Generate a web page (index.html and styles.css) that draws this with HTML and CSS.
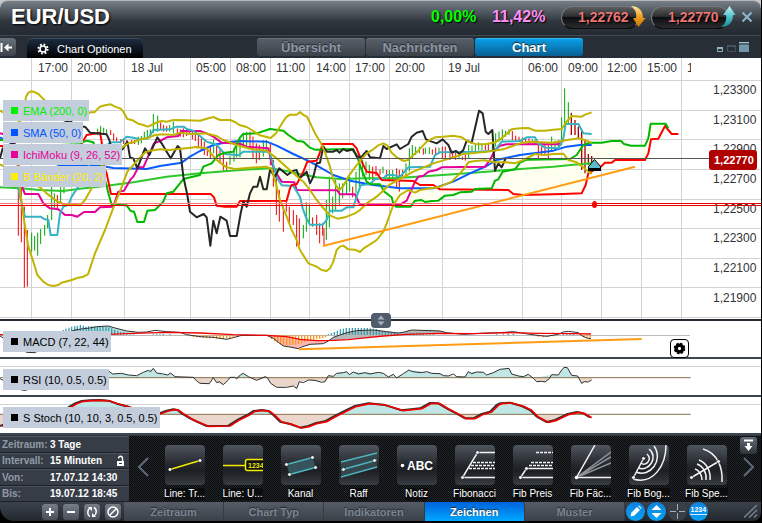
FILE: index.html
```
<!DOCTYPE html>
<html lang="de">
<head>
<meta charset="utf-8">
<title>EUR/USD</title>
<link rel="stylesheet" href="styles.css">
</head>
<body>
<main class="window">
  <header class="title-bar">
    <h1>EUR/USD</h1>
    <div class="quotes">
      <span class="change up">0,00%</span>
      <span class="change spread">11,42%</span>
      <button class="price">1,22762
        <svg class="arrow" width="16" height="24" viewBox="0 0 16 24"><defs><linearGradient id="gold" x1="0" y1="0" x2="0" y2="1"><stop offset="0" stop-color="#ffe9a0"/><stop offset=".5" stop-color="#f0a020"/><stop offset="1" stop-color="#c87000"/></linearGradient></defs><path d="M1 1C8 1 13 5 13 13H15.500L8.500 22L3 13H6C7 8 5 4 1 1Z" fill="url(#gold)"/></svg>
      </button>
      <button class="price">1,22770
        <svg class="arrow" width="16" height="24" viewBox="0 0 16 24"><defs><linearGradient id="aqua" x1="0" y1="0" x2="0" y2="1"><stop offset="0" stop-color="#c5f4f5"/><stop offset=".5" stop-color="#4fc4cc"/><stop offset="1" stop-color="#1d8790"/></linearGradient></defs><path d="M1 22C8 22 13 18 13 10H15.500L9.500 1L3 10H6C7 15 5 19 1 22Z" fill="url(#aqua)"/></svg>
      </button>
      <button class="plain" aria-label="Schließen"><svg width="12" height="12" viewBox="0 0 12 12"><path d="M1.500 1.500L10.500 10.500M10.500 1.500L1.500 10.500" stroke="#8cb6cf" stroke-width="2"/></svg></button>
    </div>
  </header>

  <nav class="view-bar">
    <button class="collapse" aria-label="Einklappen"><svg width="16" height="18" viewBox="0 0 16 18"><path d="M1.500 5V14M12 9.500H6" stroke="#fff" stroke-width="2" fill="none"/><path d="M4 9.500L8.500 5.500V13.500Z" fill="#fff"/></svg></button>
    <button class="options"><svg width="12" height="12" viewBox="-6 -6 12 12"><circle r="3" fill="none" stroke="#fff" stroke-width="1.600"/><circle r="4.600" fill="none" stroke="#fff" stroke-width="2" stroke-dasharray="1.800 1.813"/></svg>Chart Optionen</button>
    <div class="views">
      <button class="view">Übersicht</button>
      <button class="view">Nachrichten</button>
      <button class="view active">Chart</button>
    </div>
    <svg class="win-icons" width="34" height="12" viewBox="0 0 34 12"><path d="M1.500 6.500H6.500V10.500H1.500Z" fill="none" stroke="#8fb2c4"/><path d="M1 6H7V8H1Z" fill="#8fb2c4"/><path d="M11.500 4.500H19.500V10.500H11.500Z" fill="none" stroke="#44505c"/><path d="M11 4H20V6H11Z" fill="#44505c"/><path d="M23 1H33V11H23Z" fill="#7195a9"/><path d="M23 3H33" stroke="#26303a"/><path d="M23 1.500H33" stroke="#9fc3d6"/></svg>
  </nav>

  <section class="price-chart">
    <svg class="plot" viewBox="0 58 761 261">
      <path class="grid" d="M31.500 58V319M71.500 58V319M124.500 58V319M190.500 58V319M230.500 58V319M270.500 58V319M309.500 58V319M349.500 58V319M389.500 58V319M442.500 58V319M522.500 58V319M561.500 58V319M601.500 58V319M641.500 58V319M681.500 58V319M0 80.500H761M0 110.500H761M0 139.500H761M0 169.500H761M0 199.500H761M0 228.500H761M0 258.500H761M0 287.500H761M0 317.500H761"/>
      <g class="axis">
        <text x="38" y="72">17:00</text><text x="77" y="72">20:00</text><text x="131" y="72">18 Jul</text><text x="196" y="72">05:00</text><text x="236" y="72">08:00</text><text x="276" y="72">11:00</text><text x="316" y="72">14:00</text><text x="355" y="72">17:00</text><text x="395" y="72">20:00</text><text x="448" y="72">19 Jul</text><text x="528" y="72">06:00</text><text x="568" y="72">09:00</text><text x="607" y="72">12:00</text><text x="647" y="72">15:00</text><text x="687" y="72" clip-path="url(#time-end)">1</text>
        <text x="713" y="94">1,23300</text><text x="713" y="124">1,23100</text><text x="713" y="153">1,22900</text><text x="713" y="183">1,22700</text><text x="713" y="213">1,22500</text><text x="713" y="242">1,22300</text><text x="713" y="272">1,22100</text><text x="713" y="302">1,21900</text>
      </g>
      <clipPath id="time-end"><rect x="684" y="58" width="7" height="20"/></clipPath>
      <g class="series" transform="translate(0 80) scale(.333333)">
        <g class="cloud">
          <path d="M333 345L632 342 650 377 710 380 720 363 860 362 875 315 910 275 922 245 950 242 968 200 945 209 910 185 850 152 810 147 730 162 700 215 655 225 610 260 600 285 550 297 500 340 465 390 442 392 432 426 412 426 402 395 380 376 335 374Z"/>
          <path d="M968 192H1058L1085 245 1100 275 1130 279 1145 300 1240 303 1300 315 1320 328 1525 330 1540 342 1745 340 1757 315 1765 280 1805 258 1845 240 1935 240 1953 178 1975 176 1997 131 1952 131 1935 197 1893 197 1863 183 1770 188 1750 195 1710 237 1580 239 1545 268 1508 275 1475 325 1380 337 1335 347 1315 362 1188 380 1153 335 1140 313 1100 305 1070 225 1055 207 968 209Z"/>
        </g>
        <path class="candle red" d="M55 290V467M64 310V487M73 380V623M82 450V620M172 345V385M332 150V165M341 160V182M350 172V185M362 178V190M371 180V192M380 180V192M395 180V192M404 180V192M482 127V150M491 135V155M500 138V155M532 145V165M541 148V170M550 145V172M560 150V168M568 152V165M577 155V178M586 155V183M595 165V205M604 175V210M613 185V225M622 200V228M631 200V235M650 190V238M660 205V250M670 222V272M680 245V273M750 155V205M759 170V235M769 190V250M778 195V240M811 190V256M820 240V320M829 280V405M838 330V425M850 380V455M859 360V395M868 380V430M880 390V435M890 405V500M898 415V495M938 412V440M950 405V465M959 430V490M968 430V467M972 445V495M1058 320V352M1118 260V300M1128 258V288M1140 268V285M1160 270V290M1190 265V325M1198 270V335M1208 270V290M1270 205V224M1297 208V224M1307 203V223M1327 200V237M1336 200V237M1350 205V240M1358 212V235M1367 215V240M1387 230V240M1396 225V242M1456 190V210M1465 192V213M1537 153V180M1547 167V182M1557 170V185M1567 173V188M1577 175V190M1587 175V192M1605 180V194M1615 185V235M1625 190V228M1635 195V228M1645 190V237"/>
        <path class="candle green" d="M95 458V515M104 468V512M113 458V527M122 447V492M134 435V467M143 405V445M155 320V420M163 340V383M182 318V370M192 318V340M293 146V165M302 138V160M311 143V160M320 148V160M415 170V195M424 168V190M433 155V180M442 150V178M451 148V172M460 102V160M473 107V155M509 135V155M520 125V160M641 178V220M690 228V255M702 205V245M710 190V232M720 175V232M730 158V200M740 155V200M790 180V230M799 180V215M910 435V475M919 367V455M928 373V430M979 360V480M988 290V442M998 350V400M1007 300V390M1018 310V375M1028 310V355M1040 300V345M1049 290V335M1068 275V340M1078 240V320M1088 240V290M1098 245V285M1108 255V300M1149 260V280M1168 270V305M1178 270V300M1218 250V290M1228 205V275M1237 195V235M1247 200V225M1258 200V220M1276 203V222M1288 202V222M1317 203V220M1377 225V238M1406 195V235M1416 197V220M1426 192V218M1436 187V210M1446 190V210M1477 187V211M1487 160V200M1497 155V185M1507 148V185M1517 152V170M1527 148V165M1597 178V193M1655 170V215M1665 182V210M1675 180V208M1685 112V195M1694 25V150M1705 67V130"/>
        <path class="candle dark" d="M1714 98V165M1725 120V165M1735 140V175M1745 150V270M1755 178V280M1765 222V255M1775 228V250"/>
        <polyline class="ema" points="0,322 60,325 120,330 190,333 240,326 315,318 400,307 500,290 600,280 720,270 810,265 860,273 900,282 950,292 1020,297 1100,295 1180,295 1250,290 1360,283 1460,275 1560,267 1660,260 1720,254 1775,250"/>
        <polyline class="sma" points="0,172 90,220 180,257 300,257 340,264 440,267 480,258 545,248 570,230 600,213 640,195 680,187 720,183 800,185 830,197 880,222 930,245 960,262 1000,285 1050,302 1120,315 1200,325 1300,325 1360,305 1410,280 1460,258 1490,240 1560,225 1660,212 1700,200 1740,195 1775,195"/>
        <polyline class="ichi" points="0,160 40,170 68,325 75,342 115,342 130,370 150,385 175,388 195,405 215,405 232,410 252,396 285,396 300,382 340,380 355,335 372,332 392,298 400,290 415,262 430,262 445,228 462,190 480,183 500,172 535,168 545,153 600,153 620,160 640,170 665,188 700,190 725,193 740,200 805,205 815,250 835,290 845,305 883,307 890,330 1012,331 1020,343 1065,343 1080,375 1200,374 1220,362 1232,335 1245,305 1255,290 1270,287 1285,275 1310,270 1325,262 1455,260 1470,240 1485,210 1500,197 1520,193 1675,193 1690,182"/>
        <polyline class="tenkan" points="50,300 60,350 75,410 122,410 132,417 145,420 152,465 172,465 180,400 190,380 205,375 215,350 235,320 290,210 335,187 360,187 380,170 400,173 420,178 445,175 460,150 510,148 530,140 552,140 560,147 580,152 600,168 620,185 650,195 675,222 715,226 730,215 800,215 810,220 820,255 830,292 845,316 880,318 900,350 908,385 918,412 930,434 968,434 980,420 990,392 1025,392 1040,382 1060,382 1070,350 1082,316 1110,312 1125,298 1150,295 1160,285 1180,285 1200,290 1225,262 1290,260 1305,225 1320,217 1430,215 1485,212 1505,185 1560,183 1580,172 1605,172 1615,190 1635,203 1675,205 1690,175 1697,132 1735,132 1750,160 1775,162"/>
        <polyline class="senkou-b" points="0,198 240,198 260,165 300,158 305,185 310,255 320,280 333,342 632,342 642,352 650,377 675,380 710,380 720,363 860,362 870,325 875,315 890,313 910,275 922,245 950,242 957,225 968,192 1058,192 1070,205 1085,245 1100,275 1130,279 1145,300 1240,303 1260,315 1300,315 1320,328 1525,330 1540,342 1570,345 1690,342 1745,340 1757,315 1765,280 1790,265 1805,258 1815,248 1835,248 1845,240 1935,240 1945,220 1953,178 1975,176 1995,138 2015,162 2035,162"/>
        <polyline class="senkou-a" points="0,180 245,188 260,182 280,187 315,300 328,350 335,374 380,376 392,393 402,395 412,426 432,426 442,392 465,390 490,365 500,340 520,335 540,310 550,297 600,285 610,260 635,250 655,225 675,218 700,215 720,172 730,162 770,160 810,147 850,152 865,165 890,182 910,185 930,203 945,209 1055,207 1070,225 1085,270 1100,305 1110,312 1140,313 1153,335 1175,352 1180,372 1188,380 1232,380 1245,362 1265,360 1275,366 1295,363 1315,362 1335,347 1360,345 1380,337 1415,335 1425,327 1475,325 1485,302 1495,298 1508,275 1545,268 1560,248 1580,239 1710,237 1730,225 1750,195 1770,188 1805,188 1835,183 1863,183 1872,192 1893,197 1935,197 1945,175 1952,131 1997,131 2005,145"/>
        <polyline class="chikou" points="0,235 8,205 60,180 200,125 210,122 230,140 255,140 270,158 320,163 328,180 335,210 350,212 368,208 382,185 390,232 400,235 412,265 435,205 448,225 472,172 485,190 500,215 512,235 533,198 540,205 550,290 562,345 570,395 590,412 611,402 620,412 631,497 640,422 650,460 661,410 680,422 690,468 710,468 722,400 730,365 740,380 750,340 760,320 772,320 780,290 790,328 800,328 810,270 825,290 838,265 862,285 880,272 890,270 898,295 910,285 920,275 930,310 940,290 950,250 960,248 970,200 980,215 1000,215 1010,210 1018,218 1030,207 1040,213 1060,208 1070,230 1085,230 1100,213 1110,232 1140,235 1150,198 1160,207 1190,193 1200,207 1225,192 1235,170 1250,158 1268,153 1278,178 1295,185 1310,190 1328,178 1345,195 1355,218 1368,213 1378,222 1390,210 1400,182 1415,188 1425,145 1437,92 1448,100 1457,155 1465,162 1477,150 1485,272 1495,250 1505,262 1517,235"/>
        <g class="bands">
          <polyline points="0,92 60,125 72,90 78,50 85,38 94,34 105,37 115,42 125,52 133,60 180,105 240,120 270,97 283,97 300,80 315,76 332,73 345,80 362,86 370,95 382,117 398,121 415,131 430,135 443,140 455,135 470,127 485,123 500,125 520,120 560,121 600,122 625,115 640,111 660,120 690,120 705,126 720,136 740,141 755,150 780,166 812,174 828,160 845,132 858,112 870,104 890,104 900,96 910,105 920,109 930,128 945,160 962,188 975,218 990,260 1000,300 1010,320 1018,330 1030,318 1045,290 1065,262 1080,243 1100,220 1120,208 1135,196 1150,190 1162,196 1175,218 1190,232 1212,243 1225,240 1240,225 1255,212 1280,185 1305,172 1330,170 1360,167 1385,172 1405,185 1430,193 1460,192 1485,187 1505,175 1522,160 1535,148 1560,145 1585,144 1605,152 1635,152 1660,149 1685,147 1700,125 1715,108 1745,110 1755,104 1775,97"/>
          <polyline points="0,253 120,322 140,340 170,363 190,372 240,376 255,360 275,325 315,240 362,205 385,190 400,187 420,178 440,175 465,165 490,163 520,165 540,158 570,162 615,160 650,168 670,180 710,195 750,206 800,212 830,235 860,262 890,288 910,305 930,330 950,360 975,390 990,406 1012,416 1035,412 1065,400 1080,390 1100,370 1130,350 1170,313 1200,297 1240,275 1300,250 1350,235 1390,222 1460,215 1510,208 1560,190 1590,185 1660,188 1700,180 1740,175 1775,188"/>
          <polyline points="46,200 60,330 72,420 85,500 100,545 112,585 130,605 145,615 160,618 175,615 185,608 215,600 235,593 250,590 264,583 285,520 300,485 315,450 345,370 360,335 382,275 400,255 420,232 435,218 450,212 480,208 510,210 545,206 590,201 620,205 650,240 680,262 705,267 750,263 800,260 815,268 825,300 840,360 860,410 875,450 890,480 900,510 925,550 950,560 965,570 980,573 990,565 1000,545 1010,510 1020,500 1030,497 1045,508 1065,509 1080,516 1090,506 1110,493 1130,480 1150,455 1160,430 1180,375 1200,345 1225,330 1245,338 1260,330 1320,320 1355,305 1380,280 1395,262 1405,247 1425,243 1455,241 1485,247 1520,247 1545,250 1570,240 1605,222 1635,225 1660,222 1690,221 1705,240 1730,247 1750,262 1765,275 1775,282"/>
        </g>
        <path class="trend" d="M969 498L1905 260"/>
      </g>
      <path d="M0 158.500H709" stroke="#555"/>
      <path d="M0 203.500H594" stroke="#f77"/>
      <path d="M594 203.500H761M0 205.500H761" stroke="#e80000"/>
      <ellipse cx="594.500" cy="204.500" rx="2.500" ry="3.500" fill="#f00"/>
      <path d="M588.500 166.500L594.500 159.500L600.500 166.500V170.500H588.500Z" fill="#5cbccc" stroke="#000"/><path d="M588 168H601V171H588Z"/>
      <rect x="709" y="150" width="48" height="20" rx="3" fill="#b00000"/>
      <text class="tag" x="714" y="164">1,22770</text>
    </svg>
    <ul class="legends">
      <li class="legend ema-key">EMA (200, 0)</li>
      <li class="legend sma-key">SMA (50, 0)</li>
      <li class="legend ichi-key">IchiMoku (9, 26, 52)</li>
      <li class="legend band-key">B Bänder (20, 2)</li>
    </ul>
    <button class="splitter" aria-label="Höhe ändern"><svg width="20" height="15" viewBox="0 0 20 15"><path d="M6.500 6.500L10 2.500L13.500 6.500ZM6.500 8.500L10 12.500L13.500 8.500Z" fill="#a8b2bf"/></svg></button>
  </section>

  <section class="study">
    <svg class="plot" viewBox="0 321 761 36">
      <path d="M0 335.500H690" stroke="#bbb"/>
      <g transform="translate(0 300) scale(.333333)">
        <path d="M800 106L820 115 835 127 850 138 870 141 895 146 905 141 930 133 970 131 985 123 950 122 900 118 860 110Z" fill="#fbb8b4"/>
        <path d="M985 122L1000 112 1040 98 1070 92 1120 90 1160 95 1195 99 1235 90 1320 93 1340 98 1320 100 1150 108 1045 117Z" fill="#b8b8b8"/>
        <path d="M210 103L225 90 290 80 325 78 345 84 380 93 415 97 326 103Z" fill="#b8dcdc"/>
        <path class="bar rise" d="M190 90V104M198 86V104M207 83V104M215 80V104M224 79V104M232 77V104M241 75V104M250 77V104M258 80V104M266 79V104M275 79V104M284 80V104M292 80V104M300 80V104M309 80V104M318 80V104M326 82V104M335 85V104M344 90V104M353 93V104M362 96V104M371 97V104M380 99V104M390 101V104M400 101V104M460 101V104M470 101V104M480 101V104M490 102V105M510 102V105M985 102V105M994 99V105M1003 96V105M1012 92V105M1021 88V105M1030 86V105M1039 84V105M1048 84V105M1057 84V105M1066 84V105M1075 84V105M1084 84V105M1093 84V105M1102 84V105M1111 85V105M1120 86V105M1129 87V105M1138 90V105M1147 92V105M1156 94V105M1165 95V105M1174 96V105M1183 98V105M1192 99V105M1220 99V105M1230 98V105M1240 98V105M1250 98V105M1260 98V105M1270 99V105M1280 99V105M1290 100V105M1300 101V105M1490 101V104M1510 101V104M1525 102V105M1540 102V105M1690 101V105M1700 99V105M1710 99V105M1720 101V105"/>
        <path class="bar fall" d="M570 106V109M580 106V111M590 106V112M600 106V112M610 106V115M620 106V115M630 106V115M640 106V115M650 106V116M660 106V116M670 106V117M680 106V116M690 106V114M700 106V112M710 106V111M815 106V118M824 106V124M833 106V128M842 106V132M851 106V134M860 106V135M869 106V135M878 106V135M887 106V134M896 106V132M905 106V129M914 106V126M923 106V123M932 106V121M941 106V119M950 106V118M959 106V116M968 106V115M976 106V112M1600 106V109M1615 106V111M1630 106V112M1645 106V111M1660 106V109M1743 106V108M1752 106V112M1761 106V114M1770 106V115"/>
        <polyline class="line" points="0,108 80,157 105,158 190,103 210,95 225,90 250,86 270,84 290,80 325,78 345,84 380,93 415,97 440,96 465,91 500,95 540,97 560,104 600,110 640,112 680,118 700,113 725,106 800,106 820,115 835,127 850,138 870,141 895,146 905,141 930,133 970,131 985,123 1000,112 1040,98 1070,92 1120,90 1160,95 1195,99 1210,97 1235,90 1320,93 1340,98 1390,103 1440,100 1500,98 1540,95 1590,103 1620,107 1640,109 1675,103 1690,96 1705,94 1735,98 1745,107 1760,114 1773,116"/>
        <polyline class="signal thin" points="0,104 190,106 326,103 400,100 500,97 600,99 700,104 800,106 860,110 900,118 950,122 1000,121 1045,119 1080,115 1150,108 1220,103 1320,100 1420,101 1520,98 1620,100 1720,101 1773,102"/>
        <path class="trend" d="M897 148L1925 117"/>
      </g>
    </svg>
    <span class="legend">MACD (7, 22, 44)</span>
    <button class="study-gear" aria-label="Indikator einstellen"><svg width="13" height="13" viewBox="-6.500 -6.500 13 13"><circle r="3.300" fill="none" stroke="#000" stroke-width="3.400"/><circle r="4.800" fill="none" stroke="#000" stroke-width="2" stroke-dasharray="2.300 1.470"/></svg></button>
  </section>

  <section class="study">
    <svg class="plot" viewBox="0 359 761 36">
      <path class="grid" d="M0 366.500H761"/>
      <g transform="translate(0 300) scale(.333333)">
        <defs>
          <clipPath id="rsi-up"><rect x="0" y="180" width="2283" height="53"/></clipPath>
          <clipPath id="rsi-down"><rect x="0" y="233" width="2283" height="50"/></clipPath>
          <path id="rsi" d="M0 236L65 270 75 271 200 240 324 212 338 222 365 220 385 225 410 227 430 217 445 211 452 215 460 205 470 219 490 222 503 225 512 219 525 230 580 232 590 243 600 250 628 251 640 233 650 248 658 245 670 254 685 240 690 232 705 232 710 237 722 224 730 220 745 230 770 241 795 230 802 233 812 250 830 262 860 262 880 258 890 266 898 245 910 248 925 240 945 241 965 247 975 245 985 227 1000 229 1010 220 1030 218 1040 215 1048 224 1060 216 1075 222 1095 218 1110 222 1135 217 1150 220 1165 231 1180 223 1190 234 1210 221 1227 210 1235 214 1245 216 1265 218 1280 215 1295 220 1320 221 1330 227 1345 228 1360 222 1370 230 1395 231 1405 215 1415 221 1430 216 1450 217 1460 225 1480 218 1500 208 1527 205 1535 222 1555 228 1570 230 1585 223 1600 235 1610 245 1625 244 1635 246 1648 236 1655 224 1675 225 1683 213 1692 202 1702 203 1715 226 1733 228 1745 250 1753 245 1765 246 1775 240"/>
        </defs>
        <g clip-path="url(#rsi-up)"><path class="over" d="M324 233V212L338 222 365 220 385 225 410 227 430 217 445 211 460 205 470 219 503 225 512 219 525 230 705 232 730 220 745 230 975 245 985 227 1000 229 1010 220 1040 215 1048 224 1060 216 1150 220 1165 231 1180 223 1190 234 1227 210 1320 221 1345 228 1395 231 1405 215 1450 217 1460 225 1500 208 1527 205 1535 222 1570 230 1585 223 1600 235 1655 224 1675 225 1692 202 1702 203 1715 226 1733 228 1738 233Z"/></g>
        <g clip-path="url(#rsi-down)"><path class="under" d="M580 233L590 243 600 250 628 251 640 233 650 248 670 254 690 232H745L770 241 802 233 812 250 830 262 880 258 890 266 898 245 925 240 975 245 985 233H1598L1610 245 1635 246 1650 233H1735L1745 250 1775 240V233Z"/></g>
        <path class="middle" d="M0 233H2072"/><use href="#rsi" class="line"/>
      </g>
    </svg>
    <span class="legend">RSI (10, 0.5, 0.5)</span>
  </section>

  <section class="study">
    <svg class="plot" viewBox="0 397 761 36">
      <path class="grid" d="M0 404.500H761"/>
      <g transform="translate(0 300) scale(.333333)">
        <defs>
          <clipPath id="stoch-up"><rect x="0" y="291" width="2283" height="52"/></clipPath>
          <clipPath id="stoch-down"><rect x="0" y="343" width="2283" height="56"/></clipPath>
          <path id="stoch" d="M0 378L15 372 120 370 205 322 225 310 245 303 270 301 300 300 325 302 350 311 385 320 430 342 473 342 500 332 520 328 532 330 545 340 570 355 590 365 620 378 685 377 715 358 745 343 760 333 785 330 805 333 820 345 840 365 870 372 900 383 925 378 945 370 975 364 1000 350 1040 330 1065 318 1105 310 1150 314 1170 320 1205 331 1260 325 1290 309 1315 310 1340 325 1370 341 1395 355 1420 355 1445 342 1470 335 1490 315 1500 310 1530 308 1565 318 1590 330 1610 350 1640 366 1665 360 1700 343 1730 336 1750 340 1770 352"/>
        </defs>
        <path class="over" clip-path="url(#stoch-up)" d="M165 343L205 322 245 303 300 300 325 302 385 320 430 343ZM473 343L500 332 520 328 545 343ZM745 343L760 333 785 330 805 331 820 343ZM1010 343L1040 330 1105 310 1150 314 1205 331 1260 325 1290 309 1315 310 1372 343ZM1445 343L1470 335 1500 310 1530 308 1590 330 1602 343Z"/>
        <path class="under" clip-path="url(#stoch-down)" d="M0 343V378L15 372 120 370 170 343H550L570 355 620 378 685 377 745 343H818L840 365 870 372 900 383 975 364 1010 343H1374L1395 355 1420 355 1443 343H1604L1610 350 1640 366 1665 360 1700 343Z"/>
        <path class="middle" d="M0 343H2072"/><use href="#stoch" class="line heavy"/><use href="#stoch" class="signal" x="5" y="1"/>
      </g>
    </svg>
    <span class="legend">S Stoch (10, 10, 3, 0.5, 0.5)</span>
  </section>

  <section class="drawer">
    <dl class="range">
      <div><dt>Zeitraum:</dt><dd>3 Tage</dd></div>
      <div><dt>Intervall:</dt><dd>15 Minuten</dd><dd class="lock"><svg width="9" height="12" viewBox="0 0 9 12"><path d="M1 6H8V11H1Z" fill="#fff"/><path d="M2.500 3.500C2.500 .5 6.500 .5 6.500 3.500V6" fill="none" stroke="#fff" stroke-width="1.400"/><path d="M3 8.500H6" stroke="#444"/></svg></dd></div>
      <div><dt>Von:</dt><dd>17.07.12 14:30</dd></div>
      <div><dt>Bis:</dt><dd>19.07.12 18:45</dd></div>
    </dl>
    <div class="tools">
      <button class="plain chevron" aria-label="Zurück"><svg width="12" height="20" viewBox="0 0 12 20"><path d="M11 1L2 10L11 19" fill="none" stroke="#5f6b7c" stroke-width="2"/></svg></button>
      <ul class="tool-list">
        <li><button class="tool"><svg viewBox="0 0 40 40"><path d="M5 24.500L35 15.500" stroke="#f5ea00" stroke-width="1.500"/><g class="dot"><circle cx="5" cy="24.500" r="1.800"/><circle cx="35" cy="15.500" r="1.800"/></g></svg><span>Line: Tr...</span></button></li>
        <li><button class="tool"><svg viewBox="0 0 40 40"><path d="M0 20.500H23" stroke="#f5ea00" stroke-width="1.500"/><rect x="22.500" y="14.500" width="19" height="11" rx="2" fill="#111" stroke="#f5ea00" stroke-width="1.500"/><text x="25" y="23" class="mini">1234</text></svg><span>Line: U...</span></button></li>
        <li><button class="tool"><svg viewBox="0 0 40 40"><path d="M5.500 19.500L31.500 12.500L34.500 22.500L8.500 29.500Z" fill="#35545c"/><path d="M5.500 19.500L31.500 12.500M8.500 29.500L34.500 22.500" stroke="#4fb3bd" stroke-width="1.500"/><g class="dot"><circle cx="5.500" cy="19.500" r="1.800"/><circle cx="31.500" cy="12.500" r="1.800"/><circle cx="34.500" cy="22.500" r="1.800"/><circle cx="8.500" cy="29.500" r="1.800"/></g></svg><span>Kanal</span></button></li>
        <li><button class="tool"><svg viewBox="0 0 40 40"><path d="M2 17L38 8V22L2 31Z" fill="#34464e"/><path d="M2 17L38 8M2 25L38 15M2 32L38 22" stroke="#4fb3bd" stroke-width="1.500"/><g class="dot"><circle cx="4.500" cy="24.500" r="1.800"/><circle cx="35.500" cy="15.500" r="1.800"/></g></svg><span>Raff</span></button></li>
        <li><button class="tool"><svg viewBox="0 0 40 40"><circle cx="5.500" cy="20.500" r="1.800" fill="#fff"/><text x="10" y="25" class="note">ABC</text></svg><span>Notiz</span></button></li>
        <li><button class="tool"><svg viewBox="0 0 40 40"><path d="M7.500 32.500L22.500 7.500H40M7.500 32.500H40" class="ink"/><path d="M18 17.500H40M16 20.500H40M14 23.500H40" class="ink dashed"/><g class="dot"><circle cx="7.500" cy="32.500" r="1.800"/><circle cx="22.500" cy="7.500" r="1.800"/></g></svg><span>Fibonacci</span></button></li>
        <li><button class="tool"><svg viewBox="0 0 40 40"><path d="M7.500 32.500L13.500 23.500H40M7.500 32.500H40" class="ink"/><path d="M23 7.500H40M18 17.500H40M16 20.500H40" class="ink dashed"/><g class="dot"><circle cx="7.500" cy="32.500" r="1.800"/><circle cx="13.500" cy="23.500" r="1.800"/></g></svg><span>Fib Preis</span></button></li>
        <li><button class="tool"><svg viewBox="0 0 40 40"><path d="M24 0L5.500 32.500H40" class="ink"/><path d="M5.500 32.500L40 7M5.500 32.500L40 12M5.500 32.500L40 18" class="ink faint"/><circle cx="5.500" cy="32.500" r="1.800" fill="#fff"/></svg><span>Fib Fäc...</span></button></li>
        <li><button class="tool"><svg viewBox="0 0 40 40"><path d="M4.500 32.500L14.500 13.500M18 9C24 15 16 22 12 18M20 4C30 12 20 27 9.500 23M25 1C35 15 21 33 7 27M37 0C37 21 24 40 4 34" class="ink"/><g class="dot"><circle cx="4.500" cy="32.500" r="1.800"/><circle cx="14.500" cy="13.500" r="1.800"/></g></svg><span>Fib Bog...</span></button></li>
        <li><button class="tool"><svg viewBox="0 0 40 40"><path d="M4.500 32.500L31.500 16.500M16 4C30 8 36 22 35 37M12 15C20 18 24 27 23 35M10 19C16 21 20 28 19 35M8 24C12 25 15 30 15 35" class="ink"/><g class="dot"><circle cx="4.500" cy="32.500" r="1.800"/><circle cx="31.500" cy="16.500" r="1.800"/></g></svg><span>Fib Spe...</span></button></li>
      </ul>
      <div class="tool-end">
        <button class="dock" aria-label="Andocken"><svg width="17" height="17" viewBox="0 0 17 17"><path d="M4 3.500H13" stroke="#fff" stroke-width="2"/><path d="M8.500 6V10" stroke="#fff" stroke-width="3"/><path d="M4.500 9H12.500L8.500 14Z" fill="#fff"/></svg></button>
        <button class="plain" aria-label="Weiter"><svg width="12" height="20" viewBox="0 0 12 20"><path d="M1 1L10 10L1 19" fill="none" stroke="#5f6b7c" stroke-width="2"/></svg></button>
      </div>
    </div>
  </section>

  <footer class="status">
    <div class="zoom">
      <button class="key" aria-label="Vergrößern"><svg viewBox="0 0 16 16"><path d="M4 8H12M8 4V12" stroke="#fff" stroke-width="2"/></svg></button>
      <button class="key" aria-label="Verkleinern"><svg viewBox="0 0 16 16"><path d="M4 8H12" stroke="#fff" stroke-width="2"/></svg></button>
      <button class="key" aria-label="Aktualisieren"><svg viewBox="0 0 16 16"><path d="M6 12.500C3 11 3 6 6 4M10 3.500C13 5 13 10 10 12" fill="none" stroke="#fff" stroke-width="1.500"/><path d="M4 3H8V7ZM12 13H8V9Z" fill="#fff"/></svg></button>
      <button class="key" aria-label="Löschen"><svg viewBox="0 0 16 16"><circle cx="8" cy="8" r="5" fill="none" stroke="#fff" stroke-width="1.500"/><path d="M4.500 11.500L11.500 4.500" stroke="#fff" stroke-width="1.500"/></svg></button>
    </div>
    <nav class="tabs">
      <button class="tab">Zeitraum</button><button class="tab">Chart Typ</button><button class="tab">Indikatoren</button><button class="tab current">Zeichnen</button><button class="tab">Muster</button>
    </nav>
    <div class="modes">
      <button class="round" aria-label="Stift"><svg viewBox="0 0 19 19"><path d="M4.500 14.500L5.500 10.500L11 5L14 8L8.500 13.500Z" fill="#fff"/><path d="M12 4L13 3.500L15.500 6L15 7Z" fill="#fff"/></svg></button>
      <button class="round" aria-label="Skalieren"><svg viewBox="0 0 19 19"><path d="M4.500 8L9.500 3L14.500 8ZM4.500 11L9.500 16L14.500 11Z" fill="#fff"/></svg></button>
      <button class="round off" aria-label="Fadenkreuz"><svg viewBox="0 0 19 19"><path d="M2 9.500H8M11 9.500H17M9.500 2V8M9.500 11V17" stroke="#a9afb7"/></svg></button>
      <button class="round" aria-label="Werte"><svg viewBox="0 0 19 19"><text x="1.500" y="10" class="mini light">1234</text><path d="M1 12.500H18" stroke="#d4efff"/></svg></button>
    </div>
    <svg class="grip" width="14" height="13" viewBox="0 0 14 13"><path d="M0 12.500L13 0M5 12.500L13 5M10 12.500L13 9.500" stroke="#77818e" stroke-width="1.500"/></svg>
  </footer>
</main>
</body>
</html>
```
FILE: styles.css
```
* { box-sizing: border-box; }
body {
  margin: 0;
  background: #000;
  font-family: "Liberation Sans", Arial, sans-serif;
  font-size: 11px;
  color: #fff;
}
button { font: inherit; color: inherit; border: 0; padding: 0; margin: 0; background: none; cursor: pointer; }
svg { display: block; flex: none; }
ul, dl, dd { margin: 0; padding: 0; list-style: none; }

.window { margin-right: 1px; background: linear-gradient(#c8c8c8 0 20px, #000 20px); }

.title-bar {
  display: flex;
  align-items: center;
  justify-content: space-between;
  height: 35px;
  padding: 0 8px 2px 11px;
  border-top: 1px solid #b4b8bb;
  border-radius: 8px 8px 0 0;
  background: linear-gradient(#777f86, #30363d 60%, #242a31);
}
h1 { margin: 0; font-size: 22px; line-height: 26px; text-shadow: 1px 1px 2px #000; }
.quotes { display: flex; align-items: center; }
.change { width: 61px; font-size: 16px; font-weight: bold; text-shadow: 1px 1px 1px #000; }
.up { color: #00ff00; }
.spread { width: 69px; color: #ff8ff5; }
.price {
  position: relative;
  width: 78px;
  height: 23px;
  margin-right: 12px;
  padding-left: 16px;
  text-align: left;
  font-size: 14px;
  font-weight: bold;
  color: #e97474;
  text-shadow: 1px 1px 1px #000;
  border: 1px solid #75797d;
  border-bottom-color: #0c0d0f;
  border-radius: 12px;
  background: linear-gradient(#5c5e60, #2c2d2f 45%, #0d0e0f 50%, #292b2e);
}
.arrow { position: absolute; right: -8px; top: -2px; }

.view-bar { display: flex; align-items: flex-end; height: 23px; border-top: 1px solid #414850; background: #282e36; }
.collapse { width: 16px; height: 18px; margin: 0 11px 2px 0; border-radius: 0 4px 4px 0; background: linear-gradient(#69717b, #3c434c); }
.options {
  display: flex;
  align-items: center;
  gap: 8px;
  width: 116px;
  height: 20px;
  padding-left: 10px;
  border-radius: 6px 6px 0 0;
  border-top: 1px solid #3c4b5e;
  background: linear-gradient(#1c2b40, #000);
}
.views { display: flex; gap: 1px; margin: 0 auto 2px 114px; }
.view {
  width: 108px;
  height: 18px;
  font-size: 13px;
  font-weight: bold;
  color: #8c96a3;
  text-shadow: 0 -1px 1px #22272d;
  border-top: 1px solid #6a7078;
  border-radius: 3px;
  background: linear-gradient(#575e67, #3b424a);
}
.view.active { color: #fff; border-top-color: #34b8f0; background: linear-gradient(#079ee6, #0a5f94); }
.win-icons { margin: 0 11px 5px 0; }

.price-chart, .study { position: relative; background: #fff; color: #000; border-bottom: 2px solid #3c4650; }
.price-chart { border-color: #262b34; }
.plot { width: 100%; height: auto; }
.grid { stroke: #d3d3d3; fill: none; }
.axis { font-size: 12px; fill: #333; }
.tag { font-size: 11px; font-weight: bold; fill: #fff; }
.series polyline, .line, .signal { fill: none; stroke-linejoin: round; }
.series polyline { stroke-width: 6; }
.series .cloud { fill: #fffff0; }
.candle { stroke-width: 3; fill: none; }
.red { stroke: #f00000; }
.green { stroke: #00a500; }
.dark { stroke: #b00000; stroke-width: 4; }
.series .ema { stroke: #2cc92c; }
.series .sma { stroke: #0a5cff; }
.series .ichi { stroke: #e6009b; }
.series .tenkan { stroke: #35b3c4; }
.series .senkou-a { stroke: #00b800; }
.series .senkou-b { stroke: #ff0000; }
.series .chikou { stroke: #262626; }
.series .bands polyline { stroke: #c0b400; }
.trend { stroke: #ff9c14; stroke-width: 6; }
.bar { stroke-width: 4; }
.rise { stroke: #3c9fac; }
.fall { stroke: #ff9418; }
.line { stroke: #303030; stroke-width: 3; }
.heavy { stroke-width: 6; }
.signal { stroke: #f00000; stroke-width: 5; }
.thin { stroke-width: 4; }
.middle { stroke: #8c6f48; stroke-width: 3; }
.over { fill: #c1e6e6; }
.under { fill: #ead6ca; }

.legends { position: absolute; left: 3px; top: 42px; display: grid; justify-items: start; gap: 1px; }
.legend {
  display: flex;
  align-items: center;
  gap: 5px;
  height: 21px;
  padding: 0 2px 0 8px;
  color: #000;
  background: #c3cddc;
}
.legend::before { content: ""; width: 7px; height: 7px; background: currentColor; }
.study .legend { position: absolute; left: 3px; top: 10px; }
.price-chart .ema-key { color: #00f000; }
.price-chart .sma-key { color: #0055ff; }
.price-chart .ichi-key { color: #e6009b; }
.price-chart .band-key { color: #ffee00; }
.splitter { position: absolute; z-index: 1; left: calc(50% - 10px); bottom: -9px; border-radius: 4px; background: #505b6c; }
.study-gear { position: absolute; right: 72px; top: 18px; width: 19px; height: 19px; display: grid; place-items: center; border: 1px solid #000; border-radius: 4px; background: #fff; }

.drawer { display: flex; height: 67px; border-top: 1px solid #30363f; background: #0b0c0e; }
.range { flex: none; width: 129px; display: grid; grid-template-rows: repeat(4, 1fr); font-size: 10px; font-weight: bold; }
.range div { display: flex; align-items: center; padding-left: 2px; border-top: 1px solid #4d545e; border-bottom: 1px solid #1c2026; background: #373d46; }
.range dt { width: 48px; color: #919ba7; }
.range .lock { margin-left: auto; margin-right: 4px; }
.tools {
  flex: 1;
  min-width: 0;
  display: flex;
  align-items: flex-start;
  justify-content: space-between;
  padding: 0 4px 0 8px;
  background: repeating-conic-gradient(#08090a 0 25%, #24272a 0 50%) 0 0 / 2px 2px;
}
.chevron { margin-top: 21px; }
.tool-list { display: flex; margin-left: 2px; }
.tool-list li { width: 58px; padding-top: 9px; }
.tool { display: grid; justify-items: center; gap: 3px; width: 58px; font-size: 10px; line-height: 12px; }
.tool svg { width: 40px; height: 40px; border-radius: 4px; background: linear-gradient(#50565e, #23272c 50%, #1c1f23 65%, #383d43); }
.tool span { background: #0b0c0e; white-space: nowrap; }
.dot circle { fill: #fff; stroke: #111; stroke-width: .5; }
.ink { stroke: #f2f2f2; stroke-width: 1.5; fill: none; }
.dashed { stroke-dasharray: 3 1; }
.faint { stroke: #8f9499; }
.mini { font-size: 7px; font-weight: bold; fill: #f5ea00; }
.light { fill: #fff; }
.note { font-size: 12px; font-weight: bold; fill: #fff; }
.tool-end { display: grid; justify-items: center; gap: 3px; padding-top: 1px; }
.dock { border-radius: 3px; background: linear-gradient(#626a75, #2e343c); }
.plain svg { margin: auto; }

.status { display: flex; align-items: center; height: 19px; border-radius: 0 0 8px 14px; background: linear-gradient(#3b424b, #23282f); }
.zoom { flex: none; display: flex; gap: 5px; width: 124px; padding-left: 42px; }
.key { width: 16px; height: 16px; border-radius: 3px; background: linear-gradient(#777e88, #474e58); }
.tabs { flex: 0 1 501px; display: flex; height: 19px; }
.tab { flex: 1; font-weight: bold; color: #7b8592; text-shadow: 0 -1px 1px #22272d; border-right: 1px solid #353b43; background: linear-gradient(#555c66, #3b4149); }
.tab.current { color: #fff; background: linear-gradient(#0062dc, #00a8ff); }
.modes { display: flex; gap: 2px; margin-left: 1px; }
.round { width: 19px; height: 19px; border-radius: 50%; background: linear-gradient(#0b83e0, #0aa0f5); }
.round.off { background: #3a4048; }
.grip { margin: 0 3px 0 auto; }
```
